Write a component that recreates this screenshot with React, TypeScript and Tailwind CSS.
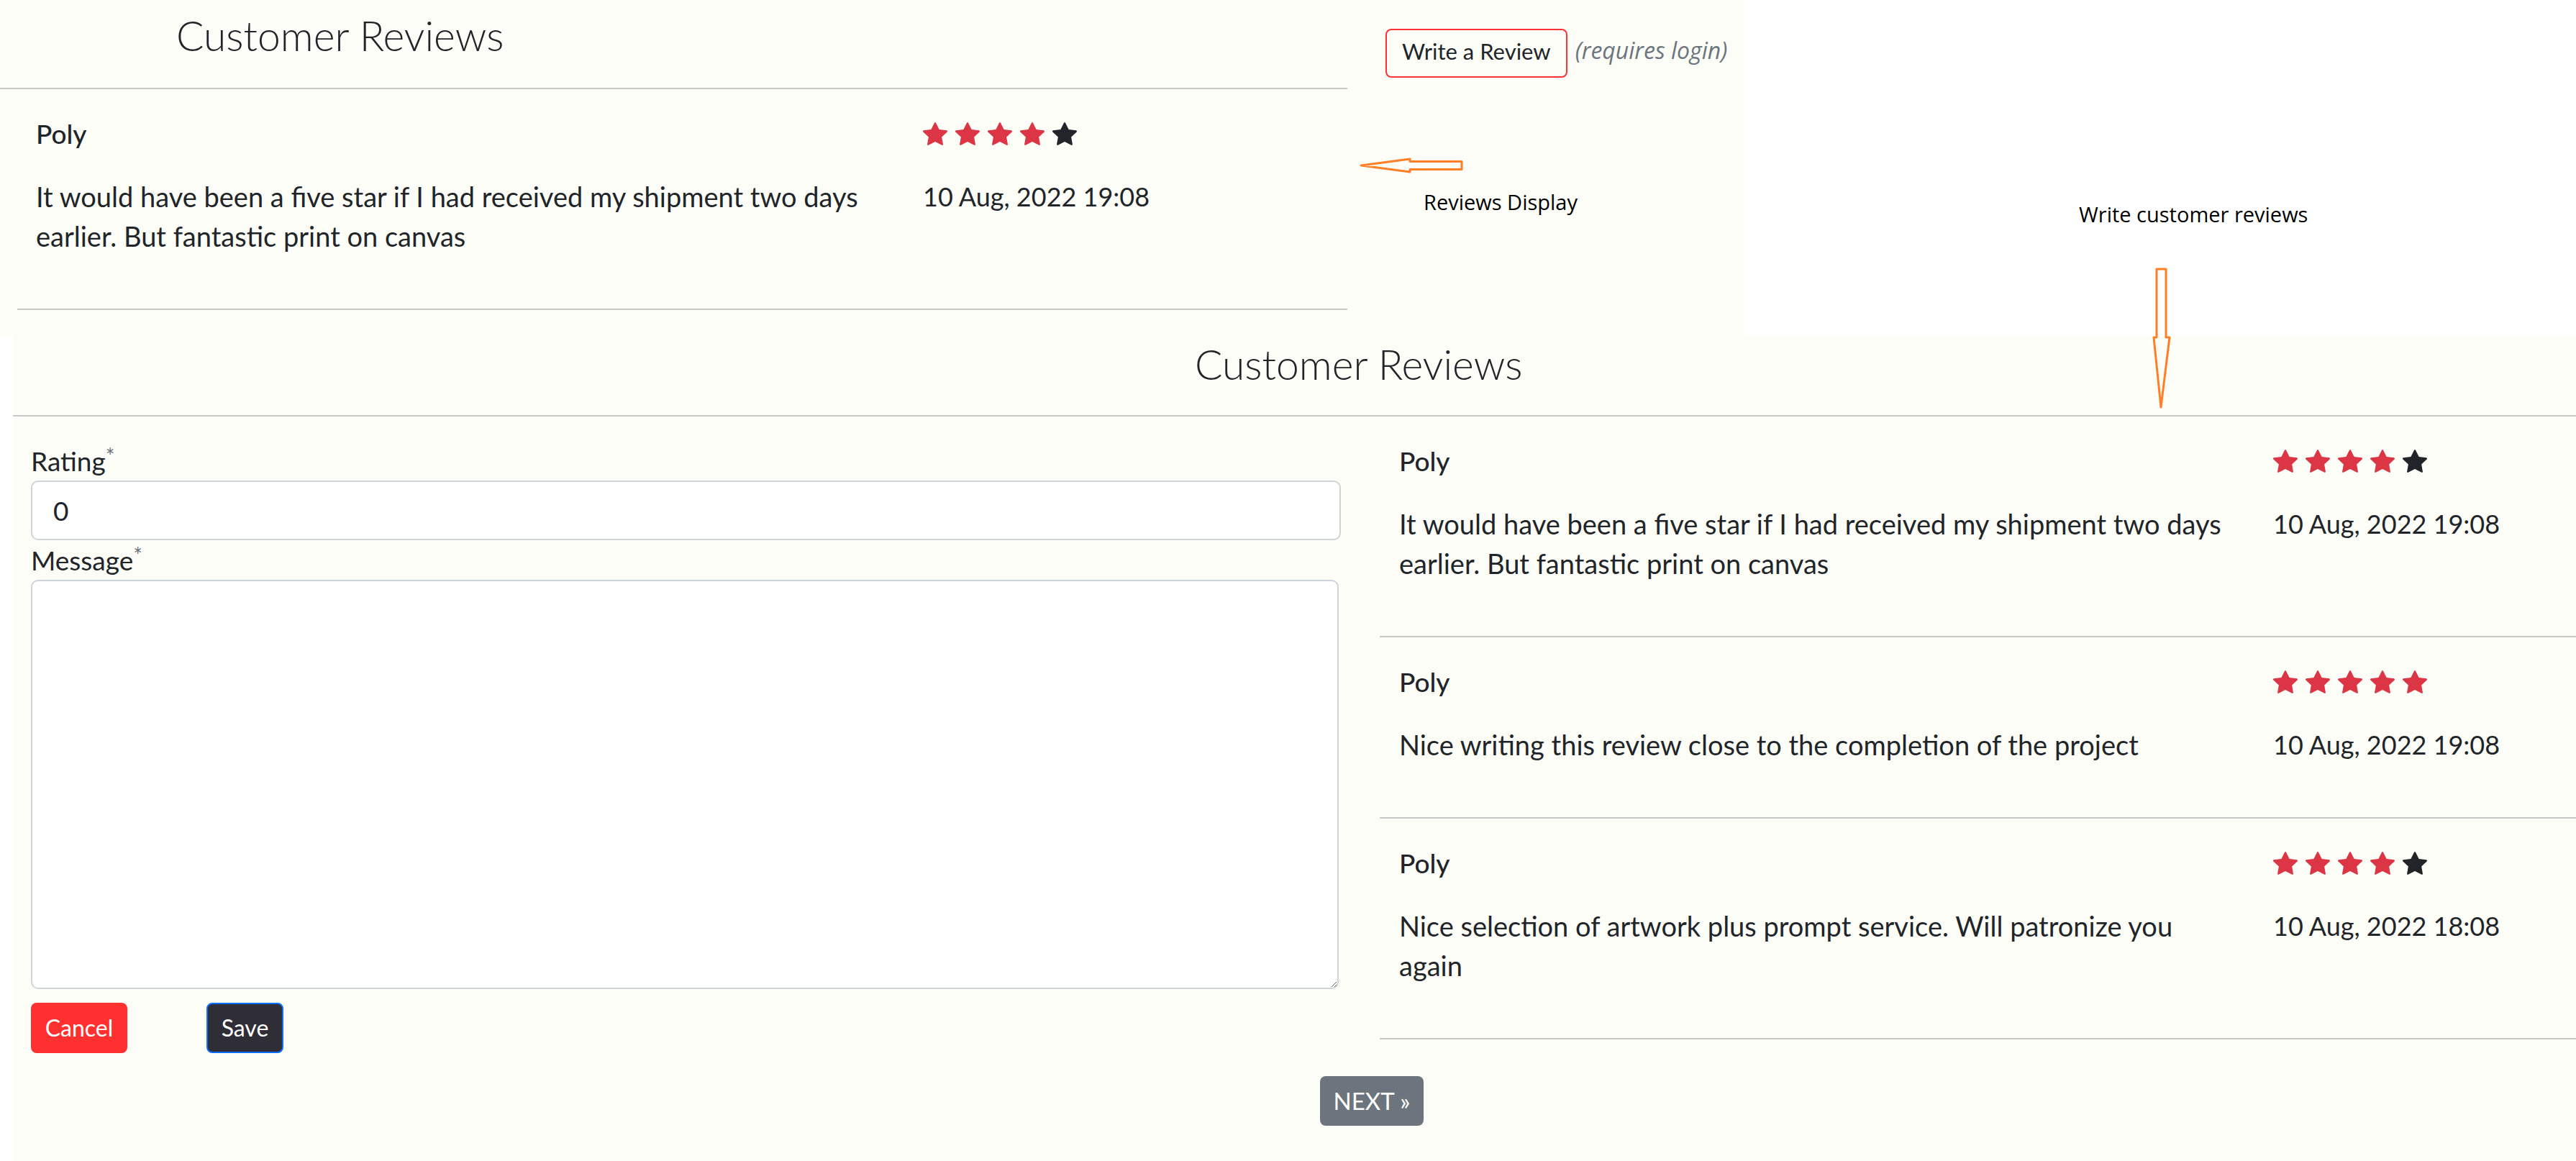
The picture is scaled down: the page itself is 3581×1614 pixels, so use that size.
import React from "react";
import { BsStarFill } from "react-icons/bs";

const CREAM = "bg-[#fdfdf8]";

function Stars({ n }: { n: number }) {
  return (
    <div className="flex items-center gap-[11px] h-[55px]">
      {[0, 1, 2, 3, 4].map((i) => (
        <BsStarFill
          key={i}
          className={i < n ? "w-[34px] h-[34px] text-[#dc3545]" : "w-[34px] h-[34px] text-[#212529]"}
        />
      ))}
    </div>
  );
}

function ReviewItem({
  lines,
  stars,
  date,
  col,
  pl,
  border,
}: {
  lines: string[];
  stars: number;
  date: string;
  col: string;
  pl: string;
  border: string;
}) {
  return (
    <div className={`${pl} pt-[34px] pb-[73px] ${border}`}>
      <div className={`grid ${col} gap-y-[33px]`}>
        <div className="font-medium leading-[55px]">Poly</div>
        <Stars n={stars} />
        <div className="leading-[55px] whitespace-nowrap text-[38px]">
          {lines.map((l, i) => (
            <div key={i}>{l}</div>
          ))}
        </div>
        <div className="leading-[55px] whitespace-nowrap text-[36px]">{date}</div>
      </div>
    </div>
  );
}

export default function App() {
  return (
    <div className="relative w-[3581px] h-[1614px] bg-white overflow-hidden text-[#212529] font-['Lato',sans-serif] text-[37px]">
      {/* top row */}
      <div className="flex h-[467px]">
        <div className={`w-[2424px] ${CREAM} flex`}>
          <div className="w-[1873px] flex flex-col">
            <div className="h-[122px] pt-[15px] pl-[245px]">
              <h2 className="text-[57px] font-light leading-[1.2]">Customer Reviews</h2>
            </div>
            <div className="h-[2px] bg-[#c8c8c8]" />
            <div className="ml-[24px]">
              <ReviewItem
                lines={[
                  "It would have been a five star if I had received my shipment two days",
                  "earlier. But fantastic print on canvas",
                ]}
                stars={4}
                date="10 Aug, 2022 19:08"
                col="grid-cols-[1233px_1fr]"
                pl="pl-[26px]"
                border="border-b-2 border-[#c8c8c8]"
              />
            </div>
          </div>
          <div className="pl-[53px] pt-[40px] flex items-start">
            <button className="border-2 border-[#ff3333] rounded-[8px] px-[21px] pt-[11px] pb-[17px] text-[31px] leading-[36px] text-[#212529] bg-transparent">
              Write a Review
            </button>
            <span className="ml-[11px] mt-[12px] font-['Open_Sans',sans-serif] text-[32px] leading-[36px] italic text-[#6c757d] whitespace-nowrap">
              (requires login)
            </span>
          </div>
        </div>
        <div className="flex-1 bg-white" />
      </div>

      {/* bottom row */}
      <div className="flex h-[1147px]">
        <div className="w-[18px] bg-white" />
        <div className={`flex-1 ${CREAM} flex flex-col`}>
          <div className="h-[110px] pt-[5px] pl-[1643px]">
            <h2 className="text-[57px] font-light leading-[1.2]">Customer Reviews</h2>
          </div>
          <div className="h-[2px] bg-[#c8c8c8]" />
          <div className="flex">
            {/* form */}
            <div className="pl-[25px] w-[1846px] pt-[34px] flex flex-col">
              <label className="leading-[55px]">
                Rating<span className="text-[30px] align-top leading-[40px] text-[#6c757d]">*</span>
              </label>
              <div className="h-[83px] w-[1821px] rounded-[10px] border-2 border-[#ced4da] bg-white px-[29px] flex items-center">
                0
              </div>
              <label className="leading-[55px]">
                Message<span className="text-[30px] align-top leading-[40px] text-[#6c757d]">*</span>
              </label>
              <textarea className="h-[569px] w-[1818px] rounded-[10px] border-2 border-[#ced4da] bg-white block" />
              <div className="flex mt-[19px]">
                <button className="w-[134px] h-[70px] rounded-[8px] bg-[#ff3030] text-white text-[32px]">
                  Cancel
                </button>
                <button className="ml-[110px] w-[107px] h-[70px] rounded-[8px] bg-[#2f2e36] border-2 border-[#0d6efd] text-white text-[32px]">
                  Save
                </button>
              </div>
            </div>
            {/* list */}
            <div className="ml-[54px] flex-1 flex flex-col">
              <ReviewItem
                lines={[
                  "It would have been a five star if I had received my shipment two days",
                  "earlier. But fantastic print on canvas",
                ]}
                stars={4}
                date="10 Aug, 2022 19:08"
                col="grid-cols-[1215px_1fr]"
                pl="pl-[27px]"
                border="border-b-2 border-[#c8c8c8]"
              />
              <ReviewItem
                lines={["Nice writing this review close to the completion of the project"]}
                stars={5}
                date="10 Aug, 2022 19:08"
                col="grid-cols-[1215px_1fr]"
                pl="pl-[27px]"
                border="border-b-2 border-[#c8c8c8]"
              />
              <ReviewItem
                lines={[
                  "Nice selection of artwork plus prompt service. Will patronize you",
                  "again",
                ]}
                stars={4}
                date="10 Aug, 2022 18:08"
                col="grid-cols-[1215px_1fr]"
                pl="pl-[27px]"
                border="border-b-2 border-[#c8c8c8]"
              />
            </div>
          </div>
          <div className="pl-[1817px] mt-[32px]">
            <button className="w-[144px] h-[69px] rounded-[8px] bg-[#6c757d] text-white text-[33px]">
              NEXT »
            </button>
          </div>
        </div>
      </div>

      {/* annotations */}
      <svg className="absolute left-[1890px] top-[219px]" width="145" height="22" viewBox="0 0 145 22">
        <polygon
          points="2,11 70,2 70,5.5 142,5.5 142,16.5 70,16.5 70,20"
          fill="none"
          stroke="#ff7f27"
          strokeWidth="3"
          strokeLinejoin="round"
        />
      </svg>
      <div className="absolute left-[1979px] top-[266px] font-['Open_Sans',sans-serif] text-[29px] leading-[30px] text-black whitespace-nowrap">
        Reviews Display
      </div>
      <div className="absolute left-[2890px] top-[283px] font-['Open_Sans',sans-serif] text-[29px] leading-[30px] text-black whitespace-nowrap">
        Write customer reviews
      </div>
      <svg className="absolute left-[2990px] top-[372px]" width="30" height="198" viewBox="0 0 30 198">
        <polygon
          points="8,2 21,2 21,97 26,97 14,194 4,97 8,97"
          fill="none"
          stroke="#ff7f27"
          strokeWidth="3"
          strokeLinejoin="round"
        />
      </svg>
    </div>
  );
}
